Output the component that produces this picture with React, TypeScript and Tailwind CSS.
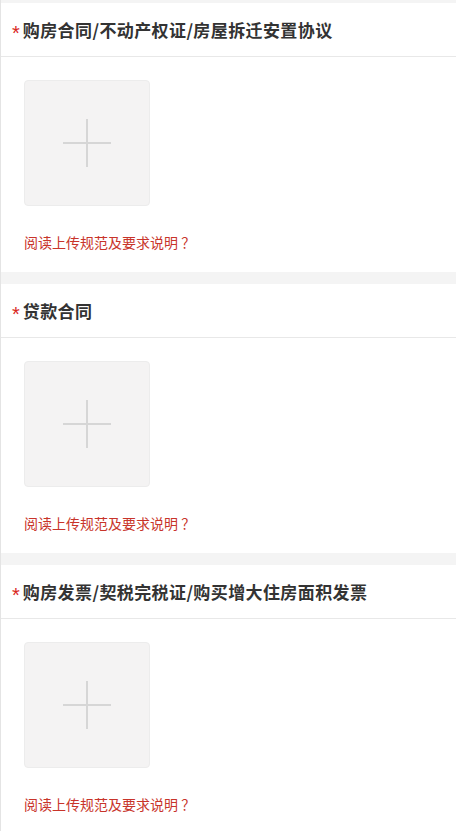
import React from 'react'

type Section = {
  title: string
}

const sections: Section[] = [
  { title: '购房合同/不动产权证/房屋拆迁安置协议' },
  { title: '贷款合同' },
  { title: '购房发票/契税完税证/购买增大住房面积发票' },
]

function UploadBox() {
  return (
    <div className="w-[126px] h-[126px] rounded-[4px] border border-[#ececec] bg-[#f4f3f3] flex items-center justify-center">
      <div className="relative w-[48px] h-[48px]">
        <div className="absolute left-[23px] top-0 w-[2px] h-full bg-[#d6d6d6]" />
        <div className="absolute top-[23px] left-0 h-[2px] w-full bg-[#d6d6d6]" />
      </div>
    </div>
  )
}

function UploadSection({ title }: Section) {
  return (
    <div className="bg-white">
      <div className="h-[54px] flex items-center border-b border-[#e8e8e8] pl-[11px]">
        <span
          className="text-[#d9261c] text-[20px] leading-none mr-[3px] mt-[7px]"
          style={{ fontFamily: '"Liberation Sans", sans-serif' }}
        >
          *
        </span>
        <span className="text-[17px] font-bold tracking-[0.4px] text-[#333]">{title}</span>
      </div>
      <div className="pl-[23px] pt-[23px] pb-[20px]">
        <UploadBox />
        <p className="mt-[26px] text-[14px] leading-[20px] text-[#c8342a]">阅读上传规范及要求说明 ？</p>
      </div>
    </div>
  )
}

export default function App() {
  return (
    <div
      className="w-[456px] min-h-[831px] bg-[#f4f4f4] border-l border-[#e4e4e4] pt-[3px] flex flex-col gap-[12px]"
      style={{ fontFamily: '"Noto Sans CJK SC", "Liberation Sans", sans-serif' }}
    >
      {sections.map((s) => (
        <UploadSection key={s.title} title={s.title} />
      ))}
    </div>
  )
}
